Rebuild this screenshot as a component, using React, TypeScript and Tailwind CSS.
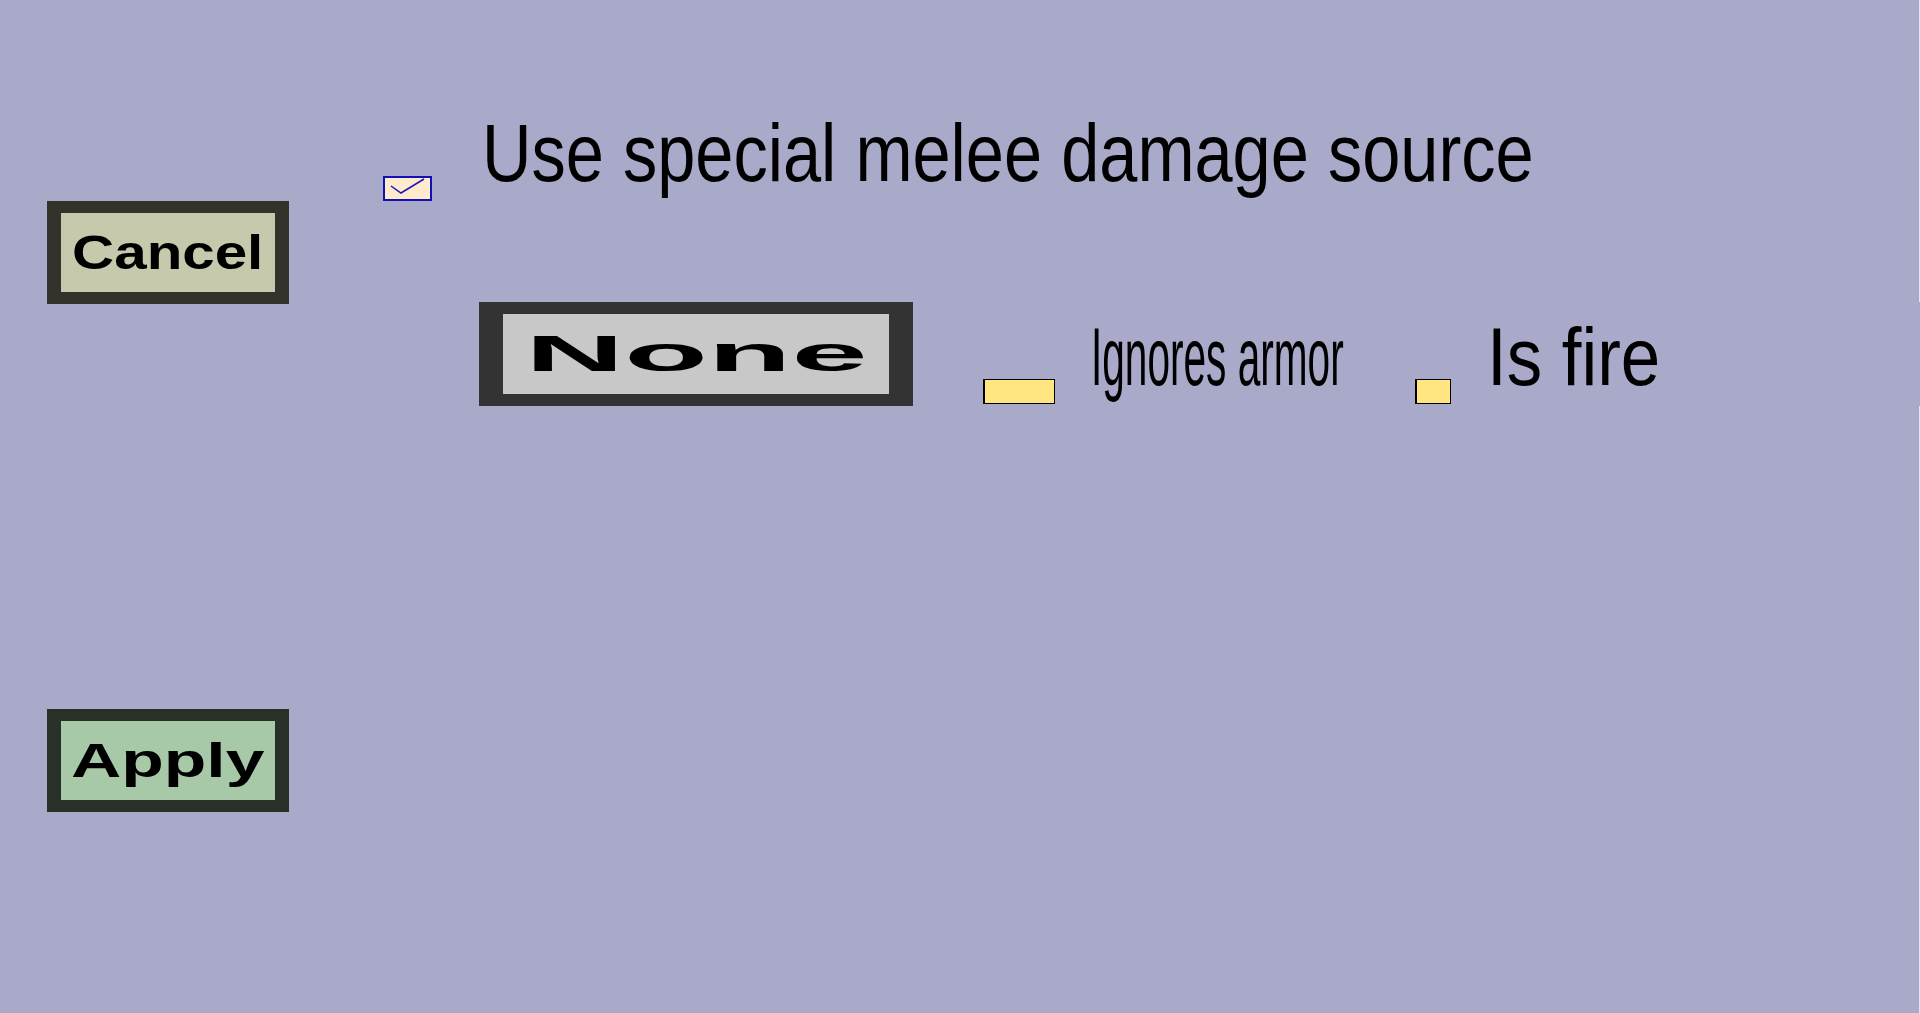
import React from 'react';

const font = { fontFamily: '"Liberation Sans", Arial, sans-serif' };

const PanelButton: React.FC<{ label: string; outer: string; inner: string; scale: string }> = ({
    label,
    outer,
    inner,
    scale,
}) => (
    <div className={`w-[242px] h-[103px] px-[14px] py-[12px] ${outer}`}>
        <div className={`w-full h-full flex items-center justify-center ${inner}`}>
            <span className={`inline-block whitespace-nowrap text-[48px] leading-none font-bold text-black ${scale}`} style={font}>
                {label}
            </span>
        </div>
    </div>
);

const YellowBox: React.FC<{ width: string }> = ({ width }) => (
    <div className={`${width} h-[25px] shrink-0 bg-[#ffe680] border border-black border-l-2`} />
);

export default function App() {
    return (
        <div className="flex w-full h-[1013px] bg-[#a9a9c9] overflow-hidden" style={font}>
            {/* left column: dialog buttons */}
            <div className="w-[383px] shrink-0 pl-[47px] pt-[201px] flex flex-col">
                <PanelButton label="Cancel" outer="bg-[#33332b]" inner="bg-[#c6c9ab]" scale="scale-x-[1.215]" />
                <div className="mt-[405px]">
                    <PanelButton label="Apply" outer="bg-[#283028]" inner="bg-[#a8c9a8]" scale="scale-x-[1.45]" />
                </div>
            </div>

            {/* options */}
            <div className="flex-1 flex flex-col">
                <div className="pt-[112px] flex items-start">
                    <div className="mt-[64px] w-[49px] h-[25px] shrink-0 bg-[#ffeacc] border-2 border-[#1010b8]">
                        <svg width="45" height="21" viewBox="0 0 45 21" className="block">
                            <polyline points="6,8 16,15 39,1" fill="none" stroke="#1818c0" strokeWidth="1.5" />
                        </svg>
                    </div>
                    <div className="ml-[50px] w-[1050px]">
                        <span className="inline-block whitespace-nowrap origin-left scale-x-[0.836] text-[82px] leading-none text-black">
                            Use special melee damage source
                        </span>
                    </div>
                </div>

                <div className="mt-[101px] flex items-start">
                    <div className="ml-[96px] w-[434px] h-[104px] shrink-0 bg-[#333333] px-[24px] py-[12px]">
                        <div className="w-full h-full bg-[#c8c8c8] flex items-center justify-center">
                            <span className="inline-block whitespace-nowrap scale-x-[2.74] text-[50px] leading-none font-bold text-black">
                                None
                            </span>
                        </div>
                    </div>

                    <div className="ml-[70px] mt-[77px]">
                        <YellowBox width="w-[72px]" />
                    </div>
                    <div className="ml-[36px] mt-[14px] w-[251px] shrink-0">
                        <span className="inline-block whitespace-nowrap origin-left scale-x-[0.495] text-[82px] leading-none text-black">
                            Ignores armor
                        </span>
                    </div>

                    <div className="ml-[73px] mt-[77px]">
                        <YellowBox width="w-[36px]" />
                    </div>
                    <div className="ml-[36px] mt-[14px] w-[170px] shrink-0">
                        <span className="inline-block whitespace-nowrap origin-left scale-x-[0.864] text-[82px] leading-none text-black">
                            Is fire
                        </span>
                    </div>
                </div>
            </div>

            {/* thin light edge on the right */}
            <div className="w-px shrink-0 flex flex-col">
                <div className="h-[302px] bg-[#e4e4f2]" />
                <div className="h-[104px]" />
                <div className="flex-1 bg-[#e4e4f2]" />
            </div>
        </div>
    );
}
